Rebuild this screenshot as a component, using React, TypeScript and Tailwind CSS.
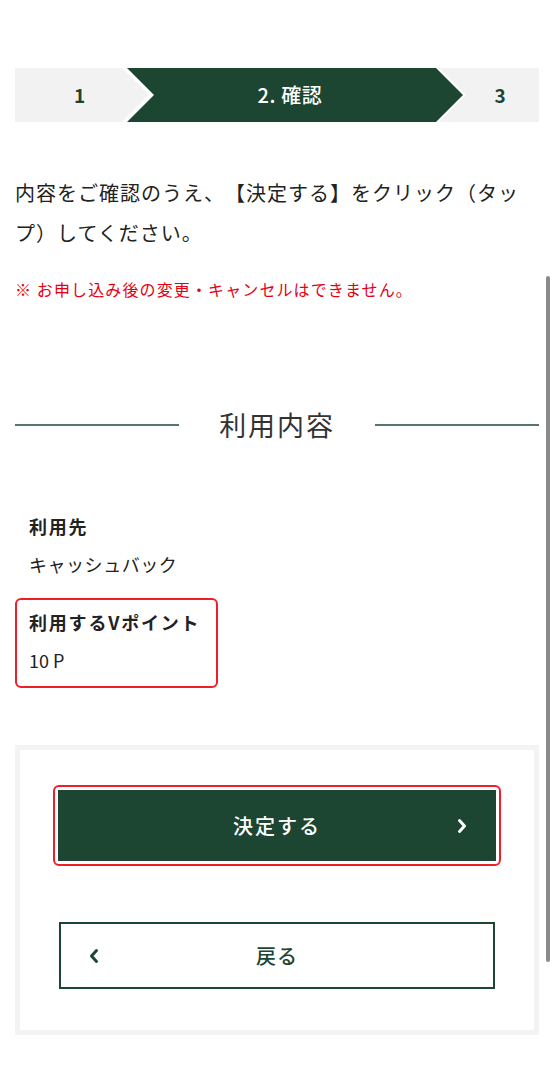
import React from "react";

function ChevronRight({ className }: { className?: string }) {
  return (
    <svg viewBox="0 0 10 16" className={className} fill="none">
      <polyline points="2.5,2.5 7.5,8 2.5,13.5" stroke="currentColor" strokeWidth="3" strokeLinecap="round" strokeLinejoin="round" />
    </svg>
  );
}

function ChevronLeft({ className }: { className?: string }) {
  return (
    <svg viewBox="0 0 10 16" className={className} fill="none">
      <polyline points="7.5,2.5 2.5,8 7.5,13.5" stroke="currentColor" strokeWidth="3" strokeLinecap="round" strokeLinejoin="round" />
    </svg>
  );
}

export default function App() {
  return (
    <div className="relative min-h-[1073px] bg-white font-['Noto_Sans_CJK_JP','Noto_Sans',sans-serif] text-[#222] [text-spacing-trim:space-all]">
      <div className="px-[15px] pt-[68px] pb-[40px]">
        {/* Stepper */}
        <div className="flex h-[54px]">
          <div className="flex w-[134px] shrink-0 items-center bg-[#f2f2f2] pl-[59px] text-[19px] font-semibold text-[#1c4632] [clip-path:polygon(0_0,107px_0,134px_50%,107px_100%,0_100%)]">
            1
          </div>
          <div className="ml-[-22px] flex w-[336px] shrink-0 items-center justify-center bg-[#1c4632] pr-[10px] text-[20px] font-medium tracking-[0.03em] text-white [clip-path:polygon(0_0,309px_0,336px_50%,309px_100%,0_100%,27px_50%)]">
            2. 確認
          </div>
          <div className="ml-[-24px] flex flex-1 items-center justify-center bg-[#f2f2f2] pl-[22px] text-[19px] font-semibold text-[#1c4632] [clip-path:polygon(0_0,100%_0,100%_100%,0_100%,27px_50%)]">
            3
          </div>
        </div>

        {/* Intro */}
        <p className="mt-[51px] text-[20px] leading-[40px] tracking-[0.05em] text-[#222]">
          内容をご確認のうえ、【決定する】をクリック（タップ）してください。
        </p>
        <p className="mt-[24px] text-[16px] leading-[24px] tracking-[0.07em] text-[#e60012]">
          ※ お申し込み後の変更・キャンセルはできません。
        </p>

        {/* Heading */}
        <div className="mt-[104px] flex h-[40px] items-center">
          <div className="h-[2px] flex-1 bg-[#55756a]" />
          <h2 className="mx-[40px] text-[27px] leading-[40px] tracking-[0.07em] text-[#333]">利用内容</h2>
          <div className="h-[2px] flex-1 bg-[#55756a]" />
        </div>

        {/* Items */}
        <div className="mt-[57px] flex flex-col items-start gap-[6px]">
          <div className="rounded-[6px] border-2 border-transparent px-[12px] pt-[9px] pb-[13px]">
            <div className="text-[18px] font-bold leading-[26px] tracking-[0.1em]">利用先</div>
            <div className="mt-[12px] text-[18px] leading-[26px] tracking-[0.03em]">キャッシュバック</div>
          </div>
          <div className="rounded-[6px] border-2 border-[#f01e28] pr-[16px] pl-[12px] pt-[9px] pb-[13px]">
            <div className="text-[18px] font-bold leading-[26px] tracking-[0.1em]">利用するVポイント</div>
            <div className="mt-[12px] text-[18px] leading-[26px]">10 P</div>
          </div>
        </div>

        {/* Button panel */}
        <div className="mt-[57px] border-[5px] border-[#f3f3f3] bg-white pt-[35px] pb-[41px]">
          <div className="mx-[33px] rounded-[6px] border-2 border-[#f01e28] p-[3px]">
            <button className="grid h-[71px] w-full grid-cols-[1fr_auto_1fr] items-center bg-[#1c4632] text-white">
              <span />
              <span className="text-[20px] font-medium tracking-[0.1em]">決定する</span>
              <span className="flex justify-end pr-[29px]">
                <ChevronRight className="h-[16px] w-[10px]" />
              </span>
            </button>
          </div>
          <button className="mx-[39px] mt-[56px] grid h-[67px] w-[436px] grid-cols-[1fr_auto_1fr] items-center border-2 border-[#1c4632] bg-white text-[#1c4632]">
            <span className="flex justify-start pl-[28px]">
              <ChevronLeft className="h-[16px] w-[10px]" />
            </span>
            <span className="text-[20px] font-medium tracking-[0.05em]">戻る</span>
            <span />
          </button>
        </div>
      </div>

      {/* Scrollbar overlay */}
      <div className="absolute right-[4px] top-[276px] h-[686px] w-[4px] rounded-full bg-[#8a8a8a]" />
    </div>
  );
}
